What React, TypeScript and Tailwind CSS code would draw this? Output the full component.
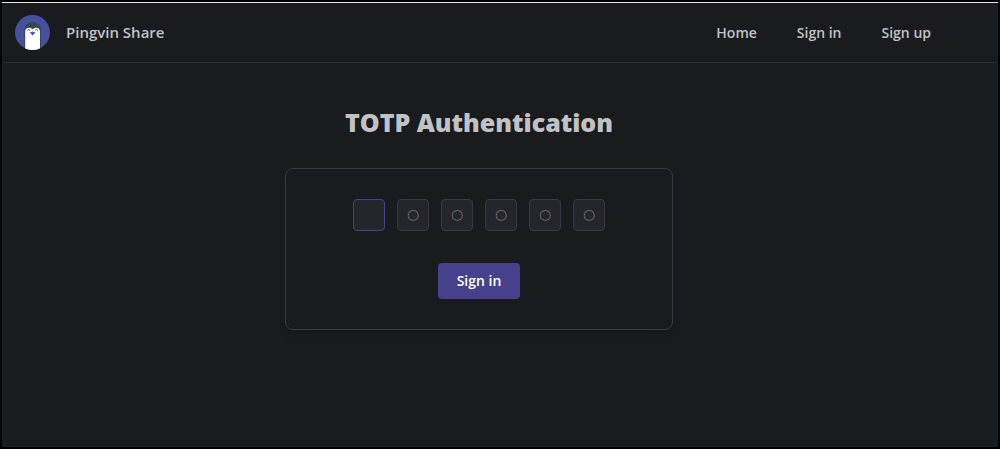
import { FormEvent, useState } from "react";

const PIN_LENGTH = 6;

const links = [
  { label: "Home", href: "#home" },
  { label: "Sign in", href: "#sign-in" },
  { label: "Sign up", href: "#sign-up" },
];

function Logo() {
  return (
    <svg viewBox="0 0 35 35" className="size-[35px]" aria-hidden="true">
      <defs>
        <clipPath id="logo-circle">
          <circle cx="17.5" cy="17.5" r="17.5" />
        </clipPath>
      </defs>
      <g clipPath="url(#logo-circle)">
        <rect width="35" height="35" fill="#46509e" />
        <path d="M9.2 35V16C9.2 10.6 12.8 7 17.6 7S26 10.6 26 16V35Z" fill="#37474f" />
        <path
          d="M10.2 35V16.5C10.2 14.2 11.7 12.7 14 12.7C15.6 12.7 16.7 13.3 17.6 14.3C18.5 13.3 19.6 12.7 21.2 12.7C23.5 12.7 25 14.2 25 16.5V35Z"
          fill="#fff"
        />
        <path d="M12.3 15.4Q13.6 13.4 14.9 15.4" fill="none" stroke="#37474f" strokeWidth="0.9" />
        <path d="M20.3 15.4Q21.6 13.4 22.9 15.4" fill="none" stroke="#37474f" strokeWidth="0.9" />
        <path d="M14.6 17.2H16.6L17.6 16.2L18.6 17.2H20.6L17.6 20.6Z" fill="#46509e" />
      </g>
    </svg>
  );
}

function Header() {
  return (
    <header className="flex h-[60px] items-center justify-between border-b border-[#2c2e33] pl-[13px] pr-[55px]">
      <a href="#home" className="flex items-center gap-4">
        <Logo />
        <span className="text-[15px] font-semibold">Pingvin Share</span>
      </a>
      <nav className="flex">
        {links.map((link) => (
          <a key={link.label} href={link.href} className="ml-4 px-3 py-2 text-sm leading-none font-semibold">
            {link.label}
          </a>
        ))}
      </nav>
    </header>
  );
}

function TotpForm() {
  const [code, setCode] = useState<string[]>(Array(PIN_LENGTH).fill(""));
  const [focused, setFocused] = useState(0);

  const handleSubmit = (e: FormEvent) => e.preventDefault();

  return (
    <form
      onSubmit={handleSubmit}
      className="flex flex-col items-center gap-8 rounded-lg border border-[#373a40] p-[30px] shadow-lg shadow-black/5"
    >
      <div className="flex gap-3">
        {code.map((digit, index) => (
          <input
            key={index}
            type="text"
            inputMode="numeric"
            maxLength={1}
            aria-label={`Digit ${index + 1}`}
            placeholder={focused === index ? "" : "○"}
            value={digit}
            onFocus={() => setFocused(index)}
            onChange={(e) => setCode(code.map((value, i) => (i === index ? e.target.value : value)))}
            className={`size-8 rounded border bg-[#25262b] pb-0.5 text-center font-['DejaVu_Sans',sans-serif] text-sm outline-none placeholder:text-[#6c7078] ${
              focused === index ? "border-[#46408d]" : "border-[#373a40]"
            }`}
          />
        ))}
      </div>
      <button type="submit" className="h-9 rounded bg-[#46408d] px-[19px] text-sm font-semibold text-white">
        Sign in
      </button>
    </form>
  );
}

export default function App() {
  return (
    <div className="min-h-screen border-2 border-black bg-[#1a1b1e] font-['Open_Sans','Noto_Sans',sans-serif] text-[#c1c2c5]">
      <div className="border-t border-[#e6e6e6]">
        <Header />
        <main className="py-10 pr-[42px]">
          <div className="mx-auto max-w-[420px] px-4">
            <h1 className="mb-7 pt-0.5 text-center text-[25px] leading-[35px] font-extrabold">TOTP Authentication</h1>
            <TotpForm />
          </div>
        </main>
      </div>
    </div>
  );
}
